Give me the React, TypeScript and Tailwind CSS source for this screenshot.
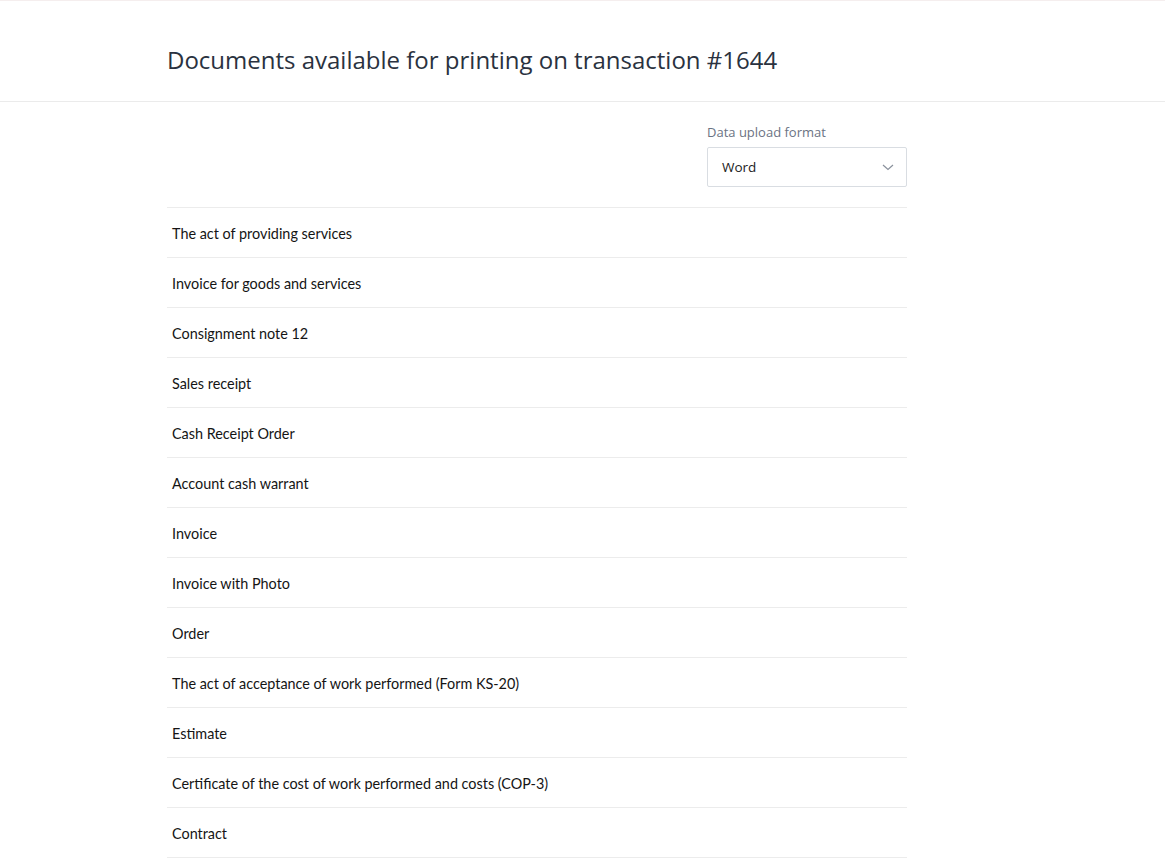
import React from 'react';

const docs = [
  'The act of providing services',
  'Invoice for goods and services',
  'Consignment note 12',
  'Sales receipt',
  'Cash Receipt Order',
  'Account cash warrant',
  'Invoice',
  'Invoice with Photo',
  'Order',
  'The act of acceptance of work performed (Form KS-20)',
  'Estimate',
  'Certificate of the cost of work performed and costs (COP-3)',
  'Contract',
];

const ChevronDown = () => (
  <svg width="12" height="7" viewBox="0 0 12 7" fill="none">
    <path d="M1 1l5 4.5L11 1" stroke="#8a919c" strokeWidth="1.2" />
  </svg>
);

export default function App() {
  return (
    <div className="min-h-screen bg-white border-t border-[#f5eeee]">
      <div className="h-[101px] border-b border-[#ebebeb] flex items-center">
        <div className="w-[740px] ml-[167px] pt-[17px]">
          <h1 className="text-[24px] text-[#2a3240] font-['Open_Sans',sans-serif]">
            Documents available for printing on transaction #1644
          </h1>
        </div>
      </div>
      <div className="w-[740px] ml-[167px] font-['Lato',sans-serif]">
        <div className="flex justify-end pt-[21px] pb-[20px]">
          <div className="w-[200px]">
            <label className="block text-[13px] text-[#6b7383] font-['Open_Sans',sans-serif] leading-[18px] mb-[6px]">
              Data upload format
            </label>
            <div className="h-[40px] border border-[#d9dde2] rounded-[2px] flex items-center justify-between pl-[14px] pr-[12px]">
              <span className="text-[13.5px] text-[#1c1c1c] font-['Open_Sans',sans-serif]">Word</span>
              <ChevronDown />
            </div>
          </div>
        </div>
        <ul className="border-t border-[#ececec]">
          {docs.map((d) => (
            <li
              key={d}
              className="h-[50px] border-b border-[#ececec] flex items-center pl-[5px] pt-[3px] text-[14.4px] text-[#151515]"
            >
              {d}
            </li>
          ))}
        </ul>
      </div>
    </div>
  );
}
